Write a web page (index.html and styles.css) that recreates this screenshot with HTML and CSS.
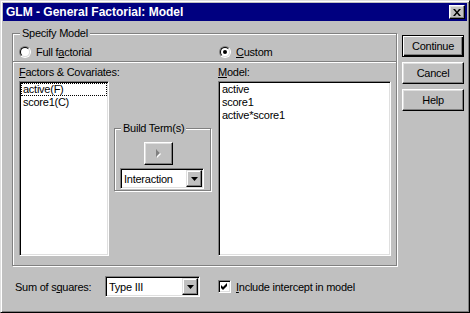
FILE: index.html
```html
<!DOCTYPE html>
<html lang="en">
<head>
  <meta charset="UTF-8" />
  <title>GLM - General Factorial: Model</title>
  <link rel="stylesheet" href="styles.css">
</head>
<body>
  <div class="window">
    <div class="titlebar">
      <span class="title">GLM - General Factorial: Model</span>
      <span class="close">
        <svg width="8" height="7" viewBox="0 0 8 7"><path d="M0 0h2l2 2.4 2-2.4h2l-3 3.5 3 3.5h-2l-2-2.4-2 2.4h-2l3-3.5z" fill="#000"/></svg>
      </span>
    </div>

    <div class="content">
      <div class="top">
        <div class="group specify">
          <div class="legend">Specify Model</div>
          <div class="radios">
            <label class="radio"><span class="circle"><span class="inner"></span></span><span>Full f<u>a</u>ctorial</span></label>
            <label class="radio"><span class="circle"><span class="inner"><span class="dot"></span></span></span><span><u>C</u>ustom</span></label>
          </div>
          <div class="separator"></div>
          <div class="lower">
            <div class="col col-factors">
              <div class="label"><u>F</u>actors &amp; Covariates:</div>
              <div class="list">
                <div class="item focus">active(F)</div>
                <div class="item">score1(C)</div>
              </div>
            </div>
            <div class="col col-build">
              <div class="group build">
                <div class="legend">Build Term(s)</div>
                <div class="btn arrow-btn">
                  <svg width="6" height="10" viewBox="0 0 6 10"><path d="M1 1l4 4-4 4z" fill="#fff"/><path d="M0 0l4 4-4 4z" fill="#808080"/></svg>
                </div>
                <div class="combo combo-build">
                  <span class="combo-text">Interaction</span>
                  <span class="combo-btn"><svg width="7" height="4" viewBox="0 0 7 4"><path d="M0 0h7l-3.5 4z" fill="#000"/></svg></span>
                </div>
              </div>
            </div>
            <div class="col col-model">
              <div class="label"><u>M</u>odel:</div>
              <div class="list">
                <div class="item">active</div>
                <div class="item">score1</div>
                <div class="item">active*score1</div>
              </div>
            </div>
          </div>
        </div>

        <div class="buttons">
          <div class="btn default">Continue</div>
          <div class="btn">Cancel</div>
          <div class="btn">Help</div>
        </div>
      </div>

      <div class="bottom">
        <div class="sum-label">Sum of s<u>q</u>uares:</div>
        <div class="combo combo-sum">
          <span class="combo-text">Type III</span>
          <span class="combo-btn"><svg width="7" height="4" viewBox="0 0 7 4"><path d="M0 0h7l-3.5 4z" fill="#000"/></svg></span>
        </div>
        <label class="check">
          <span class="box"><svg width="7" height="7" viewBox="0 0 7 7"><path d="M0 2l2 2 4-4v3l-4 4-2-2z" fill="#000"/></svg></span>
          <span><u>I</u>nclude intercept in model</span>
        </label>
      </div>
    </div>
  </div>
</body>
</html>
```

FILE: styles.css
```css
* {
  margin: 0;
  padding: 0;
  box-sizing: border-box;
}
body {
  background: #c0c0c0;
  font-family: "Liberation Sans", Arial, sans-serif;
  font-size: 11px;
  letter-spacing: -0.25px;
  color: #000;
}
u {
  text-decoration: underline;
  text-underline-offset: 1px;
}
.window {
  width: 470px;
  height: 313px;
  background: #c0c0c0;
  border: 1px solid;
  border-color: #dfdfdf #000 #000 #dfdfdf;
  box-shadow: inset 1px 1px #fff, inset -1px -1px #808080;
  padding: 2px;
}
.titlebar {
  height: 18px;
  background: #000080;
  color: #fff;
  display: flex;
  align-items: center;
  justify-content: space-between;
  padding: 0 2px 0 3px;
}
.title {
  font-weight: bold;
  font-size: 12px;
  letter-spacing: 0;
}
.close {
  width: 16px;
  height: 14px;
  background: #c0c0c0;
  border: 1px solid;
  border-color: #fff #000 #000 #fff;
  box-shadow: inset -1px -1px #808080, inset 1px 1px #dfdfdf;
  display: flex;
  align-items: center;
  justify-content: center;
}
.close svg {
  display: block;
}
.content {
  padding: 12px 0 0 9px;
}
.top {
  display: flex;
  align-items: flex-start;
}
.group {
  border: 1px solid #808080;
  box-shadow: inset 1px 1px #fff, 1px 1px #fff;
}
.legend {
  width: fit-content;
  line-height: 13px;
  padding: 0 2px;
  background: #c0c0c0;
  margin-top: -7px;
  white-space: nowrap;
}
.specify {
  width: 385px;
  height: 233px;
}
.specify > .legend {
  margin-left: 7px;
}
.radios {
  display: grid;
  grid-template-columns: 200px 1fr;
  padding-left: 6px;
  margin-top: 6px;
  height: 12px;
}
.radio {
  display: flex;
  align-items: center;
  gap: 5px;
  line-height: 12px;
  white-space: nowrap;
}
.circle {
  width: 12px;
  height: 12px;
  border-radius: 50%;
  border: 1px solid;
  border-color: #808080 #fff #fff #808080;
}
.circle .inner {
  display: flex;
  align-items: center;
  justify-content: center;
  width: 10px;
  height: 10px;
  border-radius: 50%;
  border: 1px solid;
  border-color: #000 #dfdfdf #dfdfdf #000;
  background: #fff;
}
.dot {
  width: 4px;
  height: 4px;
  border-radius: 50%;
  background: #000;
}
.separator {
  margin-top: 3px;
  height: 2px;
  border-top: 1px solid #808080;
  border-bottom: 1px solid #fff;
}
.lower {
  display: flex;
  padding: 3px 0 0 6px;
}
.label {
  line-height: 13px;
  white-space: nowrap;
}
.list {
  margin-top: 2px;
  height: 175px;
  background: #fff;
  border: 1px solid;
  border-color: #808080 #fff #fff #808080;
  box-shadow: inset 1px 1px #000, inset -1px -1px #dfdfdf;
  padding: 1px;
}
.item {
  line-height: 13px;
  padding-left: 2px;
  white-space: nowrap;
}
.item.focus {
  outline: 1px dotted #000;
  outline-offset: -1px;
}
.col-factors {
  width: 90px;
}
.col-build {
  width: 109px;
}
.col-model {
  width: 173px;
}
.build {
  width: 97px;
  margin: 62px 0 0 5px;
  padding-bottom: 1px;
}
.build > .legend {
  margin-left: 6px;
}
.btn {
  height: 22px;
  background: #c0c0c0;
  border: 1px solid;
  border-color: #fff #000 #000 #fff;
  box-shadow: inset -1px -1px #808080, inset 1px 1px #dfdfdf;
  display: flex;
  align-items: center;
  justify-content: center;
}
.btn.default {
  border-color: #000;
  box-shadow: inset 1px 1px #fff, inset -1px -1px #000, inset -2px -2px #808080;
}
.arrow-btn {
  width: 29px;
  height: 23px;
  margin: 7px 0 0 29px;
}
.combo {
  height: 21px;
  background: #fff;
  border: 1px solid;
  border-color: #808080 #fff #fff #808080;
  box-shadow: inset 1px 1px #000, inset -1px -1px #dfdfdf;
  padding: 1px;
  display: flex;
  align-items: center;
  justify-content: space-between;
}
.combo-text {
  padding-left: 2px;
  white-space: nowrap;
}
.combo-btn {
  width: 16px;
  height: 17px;
  background: #c0c0c0;
  border: 1px solid;
  border-color: #dfdfdf #000 #000 #dfdfdf;
  box-shadow: inset -1px -1px #808080, inset 1px 1px #fff;
  display: flex;
  align-items: center;
  justify-content: center;
}
.combo-btn svg {
  display: block;
}
.combo-build {
  width: 84px;
  margin: 3px 0 0 5px;
}
.buttons {
  width: 62px;
  margin: 2px 0 0 5px;
  display: flex;
  flex-direction: column;
  gap: 5px;
}
.bottom {
  display: flex;
  align-items: center;
  margin-top: 10px;
  padding-left: 3px;
}
.sum-label {
  width: 90px;
  white-space: nowrap;
}
.combo-sum {
  width: 95px;
}
.check {
  margin-left: 18px;
  display: flex;
  align-items: center;
  gap: 5px;
  white-space: nowrap;
}
.box {
  width: 13px;
  height: 13px;
  background: #fff;
  border: 1px solid;
  border-color: #808080 #fff #fff #808080;
  box-shadow: inset 1px 1px #000, inset -1px -1px #dfdfdf;
  display: flex;
  align-items: center;
  justify-content: center;
}
.box svg {
  display: block;
}
```
